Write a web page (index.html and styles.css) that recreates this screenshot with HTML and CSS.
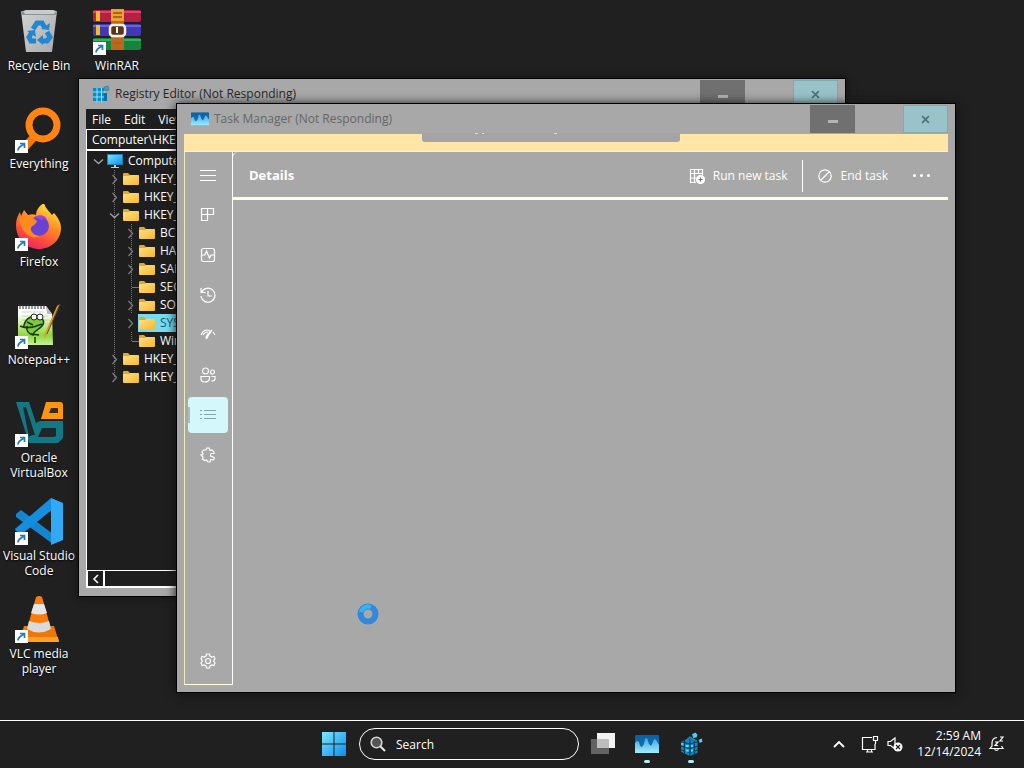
FILE: index.html
```html
<!DOCTYPE html>
<html lang="en">
<head>
<meta charset="utf-8">
<title>Desktop</title>
<link rel="stylesheet" href="styles.css">
</head>
<body>
<svg class="defs" aria-hidden="true">
  <defs>
    <linearGradient id="gBlue" x1="0" y1="0" x2="1" y2="1"><stop offset="0" stop-color="#7be8ff"/><stop offset="1" stop-color="#0a8cf0"/></linearGradient>
    <linearGradient id="gFox" x1="0.8" y1="0" x2="0.3" y2="1"><stop offset="0" stop-color="#fff04a"/><stop offset="0.4" stop-color="#ff9422"/><stop offset="0.75" stop-color="#ff4a3c"/><stop offset="1" stop-color="#e8216c"/></linearGradient>
    <linearGradient id="gNote" x1="0" y1="0" x2="0" y2="1"><stop offset="0.2" stop-color="#fff"/><stop offset="0.75" stop-color="#8fd83a"/><stop offset="1" stop-color="#c8f0a0"/></linearGradient>
    <linearGradient id="gBin" x1="0" y1="0" x2="1" y2="1"><stop offset="0" stop-color="#d2d3d3"/><stop offset="1" stop-color="#a9aaab"/></linearGradient>
    <linearGradient id="gFolder" x1="0" y1="0" x2="1" y2="1"><stop offset="0" stop-color="#ffe08a"/><stop offset="1" stop-color="#f5b92a"/></linearGradient>
    <linearGradient id="gTask" x1="0" y1="0" x2="0" y2="1"><stop offset="0" stop-color="#0b5fa0"/><stop offset="1" stop-color="#1878bd"/></linearGradient>
    <linearGradient id="gWave" x1="0" y1="0" x2="0" y2="1"><stop offset="0" stop-color="#3aa6e0"/><stop offset="1" stop-color="#a2ecff"/></linearGradient>
    <symbol id="shortcut" viewBox="0 0 13 13"><path fill="#fff" d="M0 0h13v13H0z"/><path d="M3 10.500C3 7.500 5 6.500 8.500 4.500M5 3.500h4.500V8" fill="none" stroke="#2479b8" stroke-width="1.700"/></symbol>
    <symbol id="folder" viewBox="0 0 16 16"><path fill="#e8a623" d="M0 3q0-1 1-1h4l2 2h8q1 0 1 1v3H0z"/><path fill="url(#gFolder)" d="M0 6q0-1 1-1h5l1.500-1H15q1 0 1 1v8q0 1-1 1H1q-1 0-1-1z"/></symbol>
    <symbol id="right" viewBox="0 0 16 16"><path d="M6.500 4l4 4.500-4 4.500" fill="none" stroke="#7b7b7b" stroke-width="1.300"/></symbol>
    <symbol id="down" viewBox="0 0 16 16"><path d="M4 6.500l4.500 4 4.500-4" fill="none" stroke="#a0a0a0" stroke-width="1.400"/></symbol>
    <symbol id="taskicon" viewBox="0 0 24 18"><rect width="24" height="18" rx="1" fill="url(#gTask)"/><path d="M0 18V8l2-2 2 1 1 4 2 1 2-3 1-5 2-1 2 6 2 2 2-4 1-3 2 1 3 5v8z" fill="url(#gWave)"/></symbol>
    <symbol id="regicon" viewBox="0 0 22 22"><path d="M2 9l4-2 4-3 7 4v11l-7 3-8-4z" fill="#1287bd"/><path d="M2 13l8 2 7-2M2 16.500l8 2 7-2M5 7v13M10 6v16M14 8v13M2 9l8 2 7-2" stroke="#073c58" fill="none"/><path d="M12 2l3-1.500 2 2-1 2.500-3 .5zM18 7l3-1 .5 3-2.500 1z" fill="#53c9ef"/><path d="M2 10h2v2H2zM6 12h3v2H6zM6 16h3v2H6zM11 12h2v2h-2zM11 16h2v2h-2z" fill="#55d2f5"/></symbol>
  </defs>
</svg>

<div class="screen">
  <main class="desktop">
    <div class="shortcuts">
      <a class="shortcut" href="#bin">
        <svg class="pic" viewBox="0 0 48 48"><path d="M6 3h36l-5 41H11z" fill="url(#gBin)"/><path d="M6 3h36l-1 4H7z" fill="#8e9294"/><path d="M8 3l3-1h27l3 1-2 3H10z" fill="#c9cccd"/><g fill="none" stroke="#2187d3" stroke-width="5"><path d="M18 21l4-6h5l3 5"/><path d="M32 24l3 5-3 4h-6"/><path d="M21 33h-5l-2-4 3-5"/></g><path d="M26 21l8 1 1-7zM28 27v10l-6-5zM12 23l8-1 1 7z" fill="#2187d3"/></svg>
        <span>Recycle Bin</span>
      </a>
      <a class="shortcut" href="#everything">
        <svg class="pic" viewBox="0 0 48 48"><path d="M20 30L8 43" stroke="#f5780a" stroke-width="8"/><circle cx="28" cy="19" r="14" fill="none" stroke="#ff8412" stroke-width="7"/><use href="#shortcut" y="34" width="13" height="13"/></svg>
        <span>Everything</span>
      </a>
      <a class="shortcut" href="#firefox">
        <svg class="pic" viewBox="0 0 48 48"><path d="M1 21c0-6 2-10 4-13l1 4 3-6 4 5c3-1 6-1 8 0 0-5 3-9 8-12 1 5 5 8 8 12l2-2c4 5 7 9 7 15 0 12-10 21-22 21S1 36 1 21z" fill="url(#gFox)"/><circle cx="24" cy="22" r="10" fill="#6a42d2"/><path d="M20 13c4-3 10-2 12 2-3-1-4 0-5 1z" fill="#a344db"/><path d="M4 14c5-4 12-2 18 3-1 4-5 4-6 7s3 8 9 8c-9 5-19-3-21-18z" fill="#ff8a20"/><use href="#shortcut" y="34" width="13" height="13"/></svg>
        <span>Firefox</span>
      </a>
      <a class="shortcut" href="#notepad">
        <svg class="pic" viewBox="0 0 48 48"><path d="M3 4h28l6 8 1 31H3z" fill="url(#gNote)"/><path d="M5 2v5M8 2v5M11 2v5M14 2v5M17 2v5M20 2v5M23 2v5M26 2v5M29 2v5" stroke="#333"/><path d="M31 4l6 8h-5z" fill="#bbb"/><path d="M7 10h22M7 14h26M7 18h28M7 22h28" stroke="#b9c8a8" stroke-width=".7"/><path d="M9 23c2-7 6-9 12-8 8 0 9 5 6 9s-8 4-9 9c-4-1-7-4-6-8-3 1-4 1-3-2z" fill="#7fc93a" stroke="#163a0c" stroke-width="1.500"/><circle cx="19" cy="15" r="3" fill="#fff" stroke="#222"/><circle cx="25" cy="15" r="3" fill="#fff" stroke="#222"/><path d="M5 24c6 3 15 1 22-2M12 20l6 3M16 32l8 1M20 35v6" stroke="#163a0c" stroke-width="1.500" fill="none"/><path d="M45 2L32 32l-3 6 1-7L42 4z" fill="#dc9b2a"/><path d="M45 2L32 32" stroke="#6d4814"/><use href="#shortcut" y="34" width="13" height="13"/></svg>
        <span>Notepad++</span>
      </a>
      <a class="shortcut" href="#virtualbox">
        <svg class="pic" viewBox="0 0 48 48"><path d="M1 2h13l7 21 4-2h23v17l-5 5H14z" fill="#127984"/><path d="M8 7h3l9 28h-3l-3 2z" fill="#20272a"/><path d="M27 28h14v8l-2 1H23z" fill="#20272a"/><path d="M15 2h15l-6 16h-4z" fill="#202020"/><path d="M31 2h14q3 0 3 3v14H26z" fill="#fb9610"/><path d="M34 13l2-5h7v5z" fill="#3c2b14"/><use href="#shortcut" y="34" width="13" height="13"/></svg>
        <span>Oracle VirtualBox</span>
      </a>
      <a class="shortcut" href="#code">
        <svg class="pic" viewBox="0 0 48 48"><path d="M1 16l5-4L38 36v10L1 19z" fill="#1685d0"/><path d="M0 31L36 0l2 11L7 36l-6-3z" fill="#168ee0"/><path d="M36 0l12 5v37l-12 5z" fill="#31a9f4"/><use href="#shortcut" y="34" width="13" height="13"/></svg>
        <span>Visual Studio Code</span>
      </a>
      <a class="shortcut" href="#vlc">
        <svg class="pic" viewBox="0 0 48 48"><path d="M9 30h30l5 16H4z" fill="#ef7607"/><path d="M6 41h37l1 5H4z" fill="#ffa126"/><path d="M21 1q3-2 6 0l9 32q-12 7-24 0z" fill="#fb7c0b"/><path d="M19 8h10l3 9q-8 3-16 0z" fill="#e4e6e8"/><path d="M14 25q10 4 20 0l2 8q-12 7-24 0z" fill="#d8dadd"/><use href="#shortcut" y="34" width="13" height="13"/></svg>
        <span>VLC media player</span>
      </a>
    </div>
    <div class="shortcuts">
      <a class="shortcut" href="#winrar">
        <svg class="pic" viewBox="0 0 48 48"><rect y="2" width="48" height="12" rx="2" fill="#b62045"/><path d="M0 4h48" stroke="#d44a68" stroke-width="2"/><rect y="16" width="48" height="12" rx="2" fill="#4038b5"/><path d="M0 18h48" stroke="#6b66cc" stroke-width="2"/><rect y="30" width="48" height="12" rx="2" fill="#16843c"/><path d="M0 32h48" stroke="#40ab60" stroke-width="2"/><path d="M3 3h4v10H3zM3 17h4v10H3z" fill="#efbd2b"/><path d="M18 1h13v41H18z" fill="#bd681e"/><path d="M18 1h13v12H18z" fill="#f0a02c"/><path d="M20 5h9M20 9h9M20 35h9" stroke="#a86720" stroke-width="2"/><rect x="17" y="17" width="15" height="11" rx="3" fill="#5d3314" stroke="#f4f1e8" stroke-width="2.500"/><path d="M24 19v6" stroke="#fff" stroke-width="2"/><use href="#shortcut" y="34" width="13" height="13"/></svg>
        <span>WinRAR</span>
      </a>
    </div>

    <section class="window registry" aria-label="Registry Editor">
      <header class="titlebar">
        <svg class="appicon" viewBox="0 0 18 18"><path d="M1 3h11v13H1z" fill="#078bd0"/><path d="M1 7h13M1 12h13M5 3v14M9.500 3v14" stroke="#8ee2ff"/><path d="M12 8h3v8h-3z" fill="#076ea8"/><path d="M12 2l4-1 1 4-4 1z" fill="#2aa6df" stroke="#47717f" stroke-width=".7"/></svg>
        <h2>Registry Editor (Not Responding)</h2>
        <div class="controls">
          <button class="min" aria-label="Minimize"><i></i></button>
          <button class="close" aria-label="Close"><svg viewBox="0 0 8 8"><path d="M1 1l6 6M7 1L1 7"/></svg></button>
        </div>
      </header>
      <div class="regbody">
        <nav class="menubar"><button>File</button><button>Edit</button><button>View</button></nav>
        <input class="address" aria-label="Address" value="Computer\HKEY_LOCAL_MACHINE\SYSTEM">
        <div class="treepane">
          <ul class="tree">
            <li><div class="row"><svg><use href="#down"/></svg><svg viewBox="0 0 16 16"><path fill="url(#gBlue)" stroke="#1a80b6" d="M.5 1.500h15v10H.5z"/><path d="M7 12h2v2h3v1H4v-1h3z" fill="#b4d5e2"/></svg><span>Computer</span></div>
              <ul class="branch">
                <li><div class="row"><svg><use href="#right"/></svg><svg><use href="#folder"/></svg><span>HKEY_</span></div></li>
                <li><div class="row"><svg><use href="#right"/></svg><svg><use href="#folder"/></svg><span>HKEY_</span></div></li>
                <li><div class="row"><svg><use href="#down"/></svg><svg><use href="#folder"/></svg><span>HKEY_</span></div>
                  <ul class="branch">
                    <li><div class="row"><svg><use href="#right"/></svg><svg><use href="#folder"/></svg><span>BC</span></div></li>
                    <li><div class="row"><svg><use href="#right"/></svg><svg><use href="#folder"/></svg><span>HA</span></div></li>
                    <li><div class="row"><svg><use href="#right"/></svg><svg><use href="#folder"/></svg><span>SAM</span></div></li>
                    <li><div class="row leaf"><b></b><svg><use href="#folder"/></svg><span>SEC</span></div></li>
                    <li><div class="row"><svg><use href="#right"/></svg><svg><use href="#folder"/></svg><span>SO</span></div></li>
                    <li><div class="row selected"><svg><use href="#right"/></svg><svg><use href="#folder"/></svg><span>SYS</span></div></li>
                    <li><div class="row leaf"><b></b><svg><use href="#folder"/></svg><span>Win</span></div></li>
                  </ul>
                </li>
                <li><div class="row"><svg><use href="#right"/></svg><svg><use href="#folder"/></svg><span>HKEY_</span></div></li>
                <li><div class="row"><svg><use href="#right"/></svg><svg><use href="#folder"/></svg><span>HKEY_</span></div></li>
              </ul>
            </li>
          </ul>
          <div class="scroll"><button aria-label="Scroll left"><svg viewBox="0 0 8 10"><path d="M6 1L2 5l4 4" fill="none" stroke="#fff" stroke-width="1.600"/></svg></button></div>
        </div>
      </div>
    </section>

    <section class="window task" aria-label="Task Manager">
      <header class="titlebar">
        <svg class="appicon" viewBox="0 -2 24 22"><use href="#taskicon" width="24" height="18"/></svg>
        <h2>Task Manager (Not Responding)</h2>
        <div class="controls">
          <button class="min" aria-label="Minimize"><i></i></button>
          <button class="close" aria-label="Close"><svg viewBox="0 0 8 8"><path d="M1 1l6 6M7 1L1 7"/></svg></button>
        </div>
      </header>
      <div class="band"></div>
      <svg class="popup" viewBox="0 0 258 9"><path d="M53 0h3M60 0h2M132 0h3" stroke="#ddd" stroke-width="2"/></svg>
      <div class="taskbody">
        <nav class="rail">
          <button aria-label="Menu"><svg viewBox="0 0 16 16"><path d="M0 3.500h16M0 8.500h16M0 13.500h16"/></svg></button>
          <button aria-label="Processes"><svg viewBox="0 0 16 16"><path d="M1.500 1.500h6v12h-6zM1.500 7.500h12v-6h-6v6"/></svg></button>
          <button aria-label="Performance"><svg viewBox="0 0 16 16"><rect x="1.500" y="1.500" width="13" height="13" rx="2"/><path d="M2 8h3l1.500-4 3 7L11 8h3"/></svg></button>
          <button aria-label="App history"><svg viewBox="0 0 16 16"><path d="M1 1v4.500h4.500M1.500 5.500A7 7 0 1 1 1 9M8 4v5h4"/></svg></button>
          <button aria-label="Startup apps"><svg viewBox="0 0 16 16"><path d="M1 8c2-5 6-6 9-4M13 5l2 3M3 8c1-2 3-3 5-3M12 3L8 9q-1 3-2 2 0-2 2-4z"/></svg></button>
          <button aria-label="Users"><svg viewBox="0 0 16 16"><circle cx="5.500" cy="4" r="3"/><circle cx="12.500" cy="5" r="2"/><path d="M1 9.500h8.500V12q-1 3-4.500 3-4 0-4-3zM11.500 9.500H15V12q0 2-3.500 2"/></svg></button>
          <button class="active" aria-label="Details"><svg viewBox="0 0 16 16"><path d="M0 3.500h2M4 3.500h12M0 7.500h2M4 7.500h12M0 11.500h2M4 11.500h12"/></svg></button>
          <button aria-label="Services"><svg viewBox="0 0 16 16"><path d="M14 5l-2-2-2 .5L9 1H7L6 3 3.500 3 2 5l1 2-2 1 2 2-.5 2 2 1.500 2-.5L8 15h2l.5-2.500 2.500.5 1.500-2-2-1.500H11a3 3 0 0 1 0-3h3z"/></svg></button>
          <button class="settings" aria-label="Settings"><svg viewBox="0 0 16 16"><path d="M6.500 1h3l.5 2 2 1 2-.5L15 6l-1.500 2L15 10l-1 2.500-2-.5-2 1-.5 2h-3L6 13l-2-1-2 .5L1 10l1.500-2L1 6l1-2.500L4 4l2-1z"/><circle cx="8" cy="8" r="2.500"/></svg></button>
        </nav>
        <div class="page">
          <header class="pagehead">
            <h1>Details</h1>
            <button class="run"><svg viewBox="0 0 16 16"><path d="M7 14.500H1.500v-13h12V7M1.500 5.500h12M1.500 10H7M5.500 1.500v13M9.500 1.500V6"/><circle cx="11.500" cy="11.500" r="4" fill="#fff"/><path d="M9.500 11.500h4M11.500 9.500v4" class="cut"/></svg>Run new task</button>
            <button class="end"><svg viewBox="0 0 16 16"><circle cx="8" cy="8" r="6.200"/><path d="M4 12l8-8"/></svg>End task</button>
            <button class="more" aria-label="More options"><i></i><i></i><i></i></button>
          </header>
        </div>
      </div>
    </section>
    <svg class="cursor" viewBox="0 0 22 22"><circle cx="11" cy="11" r="7.500" fill="none" stroke="#3188dc" stroke-width="6"/><path d="M4 9a7.500 7.500 0 0 1 10-5" fill="none" stroke="#38b5ee" stroke-width="4"/></svg>
  </main>

  <footer class="taskbar">
    <div class="center">
      <button aria-label="Start"><svg class="icon24" viewBox="0 0 24 24"><path fill="url(#gBlue)" d="M0 0h11.500v11.500H0zM12.500 0H24v11.500H12.500zM0 12.500h11.500V24H0zM12.500 12.500H24V24H12.500z"/></svg></button>
      <label class="search"><svg viewBox="0 0 16 16"><circle cx="6.500" cy="6.500" r="5.300" fill="#555" stroke="#d5d5d5" stroke-width="1.600"/><path d="M10.500 10.500L15 15" stroke="#e8e8e8" stroke-width="2"/></svg><input type="text" placeholder="Search" aria-label="Search"></label>
      <button aria-label="Task view"><svg class="icon24" viewBox="0 0 24 24"><path fill="#626262" d="M0 7h18v15H0z"/><path fill="#f2f2f2" d="M6 1h18v15H6z"/><path fill="#bebebe" d="M6 7h12v9H6z"/></svg></button>
      <button class="open" aria-label="Task Manager"><svg class="icon24"><use href="#taskicon"/></svg></button>
      <button class="open" aria-label="Registry Editor"><svg class="icon24"><use href="#regicon"/></svg></button>
    </div>
    <div class="tray">
      <button aria-label="Hidden icons"><svg viewBox="0 0 16 16"><path d="M3 11l5-5 5 5" stroke-width="1.800"/></svg></button>
      <button class="net" aria-label="Network"><svg viewBox="0 0 18 18"><path d="M11 2.500H1.500v12H14V9M5 17h7M6.500 15v2M10.500 15v2M12.500 1.500h4v4h-4zM14.500 6v3"/></svg></button>
      <button aria-label="Volume muted"><svg viewBox="0 0 16 16"><path d="M1 5.500h2.500L8 2v11l-4.500-3.500H1z"/><circle cx="11" cy="11" r="4.500" fill="#fff" stroke="none"/><path d="M9 9l4 4M13 9l-4 4" class="dark"/></svg></button>
      <button class="clock"><time>2:59 AM</time><time>12/14/2024</time></button>
      <button aria-label="Notifications"><svg viewBox="0 0 16 16"><path d="M8 1.500Q3 2 3 7v3l-2 2.500h13L12.500 10M5.500 13q2 3 4 0M6 6h3l-3 3.500h3M11 1h3l-3 4h3"/></svg></button>
    </div>
  </footer>
</div>
</body>
</html>
```
FILE: styles.css
```css
* { box-sizing: border-box; }
body { margin: 0; background: #202020; color: #fff; font: 12px/15px "Open Sans", "Noto Sans", sans-serif; }
button, input { font: inherit; color: inherit; background: none; border: 0; padding: 0; margin: 0; }
button { display: flex; align-items: center; justify-content: center; }
h1, h2 { margin: 0; font-size: 12px; font-weight: 400; }
ul { list-style: none; margin: 0; padding: 0; }
.defs { position: absolute; width: 0; height: 0; }
.screen { display: flex; flex-direction: column; height: 100vh; overflow: hidden; }
.desktop { position: relative; flex: 1; min-height: 0; display: flex; }

.shortcuts { width: 78px; padding-top: 8px; display: grid; grid-auto-rows: 98px; align-content: start; }
.shortcut { display: flex; flex-direction: column; align-items: center; gap: 2px; color: #fff; text-decoration: none; text-align: center; text-shadow: 0 1px 2px #000; }
.shortcut span { padding: 0 2px; }
.pic { width: 48px; height: 48px; flex: none; }

.window { position: absolute; display: flex; flex-direction: column; background: #a8a8a8; border: 1px solid #000; padding: 0 7px 7px 6px; }
.registry { left: 78px; top: 78px; width: 768px; height: 519px; padding-bottom: 8px; box-shadow: 0 0 8px #111; }
.task { left: 176px; top: 103px; width: 780px; height: 590px; box-shadow: 0 1px 10px #111; }
.titlebar { display: flex; align-items: center; gap: 5px; height: 30px; padding: 0 0 1px 7px; flex: none; color: #262626; }
.titlebar h2 { flex: 1; }
.task .titlebar { color: #666; padding-left: 8px; }
.appicon { width: 18px; height: 18px; }
.controls { display: flex; gap: 48px; align-self: stretch; padding-top: 1px; }
.controls button { width: 45px; }
.min { background: #707070; }
.min i { width: 10px; height: 3px; margin-top: 4px; background: #b4b4b4; }
.close { background: #9ac3c9; border: 1px solid #82a9af; }
.close svg { width: 9px; height: 9px; stroke: #4a7379; stroke-width: 1.500; }

.regbody { flex: 1; display: flex; flex-direction: column; background: #1e1e1e; margin-left: 1px; min-height: 0; }
.menubar { display: flex; gap: 13px; height: 20px; padding-left: 6px; flex: none; }
.address { width: 100%; height: 21px; flex: none; padding: 0 5px; border: 1px solid #fff; }
.treepane { flex: 1; display: flex; flex-direction: column; justify-content: space-between; border: 1px solid #fff; padding: 1px 0 0 3px; }
.row { display: flex; align-items: center; height: 18px; white-space: nowrap; }
.row svg { width: 16px; height: 16px; margin-right: 1px; flex: none; }
.row svg + svg, .leaf svg { margin-right: 0; }
.row span { padding-left: 5px; line-height: 18px; }
.row > b { width: 17px; height: 1px; background: linear-gradient(90deg, transparent 60%, #777 60%); }
.branch .row { padding-left: 16px; }
.branch .branch .row { padding-left: 32px; }
.branch { background: repeating-linear-gradient(#777 0 1px, transparent 1px 2px) 24px 0 / 1px calc(100% - 9px) no-repeat; }
.branch .branch { background-position: 41px 0; }
.branch .branch .selected { padding-left: 0; margin-left: 32px; background: linear-gradient(90deg, #1e1e1e 16px, #76dcee 16px); color: #125b7b; }
.scroll { height: 17px; margin-left: -3px; border-top: 1px solid #fff; border-bottom: 1px solid #fff; display: flex; }
.scroll button { width: 18px; border: 1px solid #fff; border-width: 0 2px 0 1px; }
.scroll svg { width: 8px; height: 10px; }

.band { height: 18px; flex: none; background: #ffe6a6; border-bottom: 1px solid #fff3d4; margin-left: 1px; }
.popup { position: absolute; left: 245px; top: 29px; width: 258px; height: 9px; background: #a5a3a6; border-radius: 0 0 3px 3px; }
.taskbody { flex: 1; display: flex; margin-left: 1px; min-height: 0; }
.rail { width: 49px; display: flex; flex-direction: column; align-items: flex-start; gap: 4px; padding: 5px 3px; border: 1px solid #fff; border-top: 0; border-left-color: #eeeeb4; border-bottom-color: #ffffdc; }
.rail button { width: 40px; height: 36px; border-radius: 4px; flex: none; }
.rail svg, .pagehead svg { width: 16px; height: 16px; fill: none; stroke: #fff; stroke-width: 1.200; }
.rail .active { background: linear-gradient(#a8bcc2, #a8bcc2) 0 50% / 2px 16px no-repeat #d3f7fb; }
.rail .active svg { stroke: #7fa6ad; stroke-width: 1; }
.rail .settings { margin-top: auto; }
.page { flex: 1; }
.pagehead { display: flex; align-items: center; height: 48px; padding: 2px 0 0 16px; border-bottom: 3px solid #ffffe8; border-top-left-radius: 6px; border-left: 1px solid #fff; margin-left: -1px; }
.pagehead h1 { flex: 1; font-size: 13px; font-weight: 700; }
.pagehead button { height: 32px; gap: 8px; }
.run { padding-right: 14px; border-right: 1px solid #fff; }
.end { padding: 0 25px 0 14px; }
.pagehead .cut { stroke: #777; }
.more { margin-right: 18px; }
.pagehead .more { gap: 4px; }
.more i { width: 3px; height: 3px; border-radius: 2px; background: #fff; }
.cursor { position: absolute; left: 357px; top: 603px; width: 22px; height: 22px; }

.taskbar { height: 48px; flex: none; display: grid; grid-template-columns: 1fr auto 1fr; align-items: center; border-top: 1px solid #fff; padding-bottom: 1px; background: #202020; }
.center { grid-column: 2; display: flex; align-items: center; padding-right: 2px; }
.center button { width: 44px; height: 46px; }
.center > button:first-child { width: 50px; }
.icon24 { width: 24px; height: 24px; }
.open { position: relative; }
.open::after { content: ""; position: absolute; bottom: 4px; left: 19px; width: 6px; height: 3px; border-radius: 2px; background: #b3ecec; }
.search { display: flex; align-items: center; gap: 10px; width: 220px; height: 32px; padding: 0 10px; border: 1px solid #fff; border-radius: 16px; margin-right: 2px; }
.search svg { width: 16px; height: 16px; flex: none; fill: none; }
.search input { min-width: 0; flex: 1; }
.search input::placeholder { color: #fff; opacity: 1; }
.tray { grid-column: 3; justify-self: end; display: flex; align-items: center; gap: 8px; padding-right: 19px; }
.tray svg { width: 16px; height: 16px; fill: none; stroke: #fff; stroke-width: 1.200; }
.tray .net svg { width: 18px; height: 18px; }
.tray .net { margin-left: 6px; }
.tray .dark { stroke: #202020; }
.clock { flex-direction: column; align-items: flex-end; line-height: 16px; margin-left: 6px; }
```
